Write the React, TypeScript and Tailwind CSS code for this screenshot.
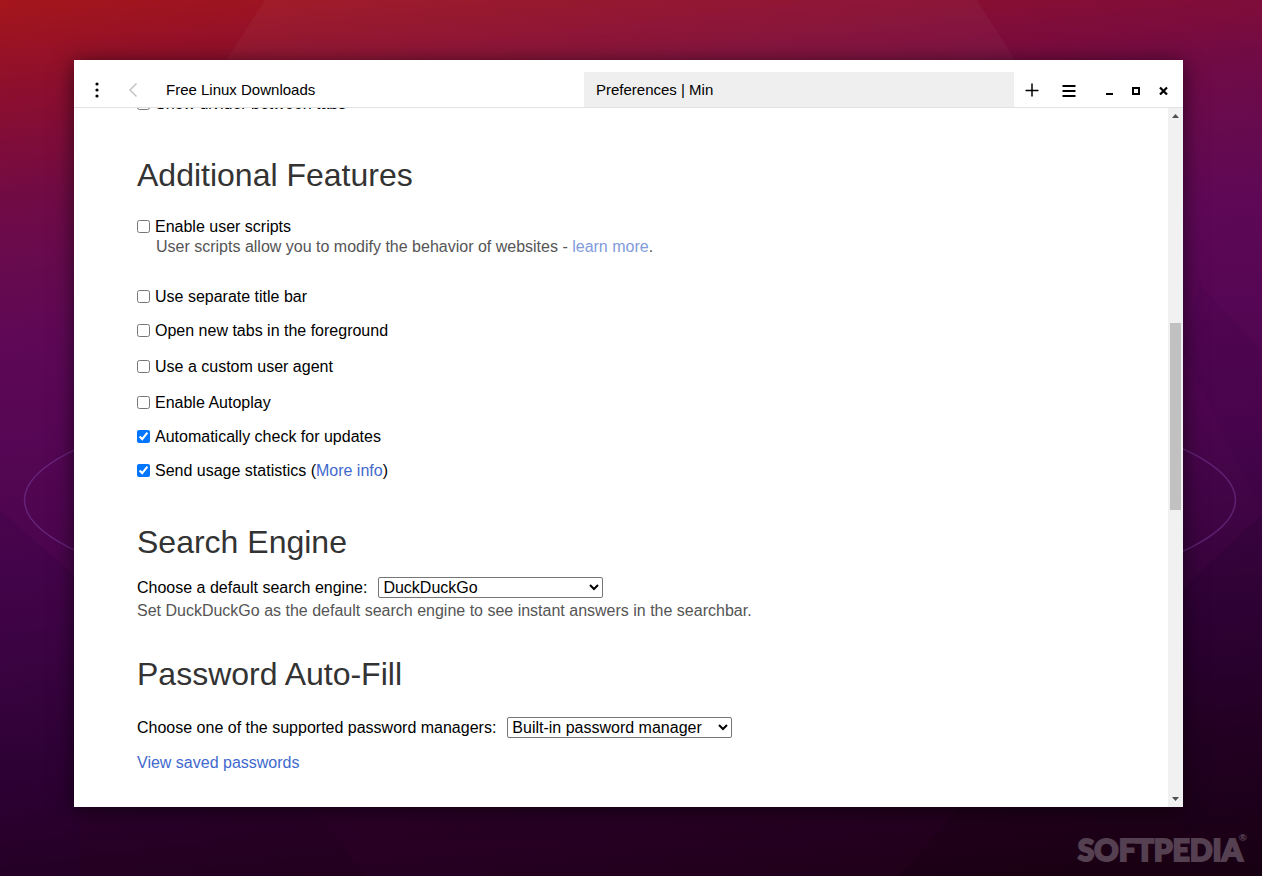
import type { ReactNode } from "react";

function Wallpaper() {
  return (
    <svg
      className="absolute inset-0 h-full w-full"
      viewBox="0 0 1262 876"
      preserveAspectRatio="none"
      aria-hidden="true"
    >
      <defs>
        <linearGradient id="sky" gradientUnits="userSpaceOnUse" x1="0" y1="0" x2="116" y2="1008">
          <stop offset="0" stopColor="#a5161b" />
          <stop offset="0.1" stopColor="#8a0e30" />
          <stop offset="0.2" stopColor="#700b46" />
          <stop offset="0.27" stopColor="#660a4f" />
          <stop offset="0.34" stopColor="#5e0856" />
          <stop offset="0.44" stopColor="#550654" />
          <stop offset="0.54" stopColor="#4c054e" />
          <stop offset="0.65" stopColor="#3e0443" />
          <stop offset="0.77" stopColor="#2e0232" />
          <stop offset="0.87" stopColor="#240021" />
          <stop offset="1" stopColor="#180010" />
        </linearGradient>
      </defs>
      <rect width="1262" height="876" fill="url(#sky)" />
      <polygon points="265,0 977,0 1040,100 225,62" fill="#ffffff" fillOpacity="0.035" />
      <polygon points="0,510 80,580 80,876 0,876" fill="#20003a" fillOpacity="0.14" />
      <polygon points="1200,285 1262,350 1262,510 1182,350" fill="#20003a" fillOpacity="0.08" />
      <polygon points="1262,514 1182,590 1182,876 1262,876" fill="#180020" fillOpacity="0.14" />
      <polygon points="305,800 965,800 900,876 365,876" fill="#40003a" fillOpacity="0.14" />
      <ellipse
        cx="630"
        cy="500"
        rx="605.5"
        ry="126"
        fill="none"
        stroke="#7b3fa0"
        strokeOpacity="0.5"
        strokeWidth="1.5"
      />
    </svg>
  );
}

function IconButton({ label, className, children }: { label: string; className: string; children: ReactNode }) {
  return (
    <button type="button" aria-label={label} className={`flex h-[35px] items-center justify-center ${className}`}>
      {children}
    </button>
  );
}

function TitleBar() {
  return (
    <header className="flex h-12 shrink-0 items-end border-b border-[#e2e2e2] bg-white px-1 text-[15px] leading-5">
      <IconButton label="Tab options" className="w-[37px]">
        <svg width="4" height="16" viewBox="0 0 4 16" fill="#000">
          <circle cx="2" cy="2" r="1.6" />
          <circle cx="2" cy="8" r="1.6" />
          <circle cx="2" cy="14" r="1.6" />
        </svg>
      </IconButton>
      <IconButton label="Back" className="mr-1 w-[35px]">
        <svg width="10" height="16" viewBox="0 0 10 16" fill="none" stroke="#c4c4c4" strokeWidth="1.5">
          <path d="M8.5 1.5 2 8l6.5 6.5" />
        </svg>
      </IconButton>
      <nav className="flex flex-1">
        <button type="button" className="h-[35px] flex-1 px-3 text-left">
          Free Linux Downloads
        </button>
        <button type="button" className="h-[35px] flex-1 bg-[#efefef] px-3 text-left">
          Preferences | Min
        </button>
      </nav>
      <IconButton label="New tab" className="w-9">
        <svg width="14" height="14" viewBox="0 0 14 14" stroke="#000" strokeWidth="1.5">
          <path d="M7 .5v13M.5 7.5h13" />
        </svg>
      </IconButton>
      <IconButton label="Menu" className="mr-2 w-[38px]">
        <svg width="14" height="14" viewBox="0 0 14 14" stroke="#000" strokeWidth="2">
          <path d="M.5 3h13M.5 8h13M.5 13h13" />
        </svg>
      </IconButton>
      <IconButton label="Minimize" className="w-[27px]">
        <svg width="10" height="10" viewBox="0 0 10 10" fill="#000">
          <rect x="1" y="8" width="7" height="2" />
        </svg>
      </IconButton>
      <IconButton label="Maximize" className="w-[27px]">
        <svg width="10" height="10" viewBox="0 0 10 10" fill="none" stroke="#000" strokeWidth="2">
          <rect x="1" y="3" width="6" height="6" />
        </svg>
      </IconButton>
      <IconButton label="Close" className="mr-[2px] w-[27px]">
        <svg width="10" height="10" viewBox="0 0 10 10" stroke="#000" strokeWidth="2.2">
          <path d="m1 2.5 7 7M8 2.5l-7 7" />
        </svg>
      </IconButton>
    </header>
  );
}

function Option({ children, checked = false }: { children: ReactNode; checked?: boolean }) {
  return (
    <label className="flex h-[21px] items-center gap-[5px]">
      <input type="checkbox" defaultChecked={checked} className="h-[13px] w-[13px] shrink-0" />
      <span>{children}</span>
    </label>
  );
}

function Heading({ children }: { children: ReactNode }) {
  return <h2 className="text-[32px] leading-9 text-[#333]">{children}</h2>;
}

function Picker({ id, label, options }: { id: string; label: string; options: string[] }) {
  return (
    <div className="flex items-center gap-[11px]">
      <label htmlFor={id}>{label}</label>
      <select id={id} className="h-[21px] w-[225px] rounded-[2px] border border-[#767676] bg-white leading-5">
        {options.map((option) => (
          <option key={option}>{option}</option>
        ))}
      </select>
    </div>
  );
}

function Preferences() {
  return (
    <main className="flex-1 overflow-hidden px-[63px] pb-8 leading-5">
      <div className="-mt-[15px]">
        <Option>Show divider between tabs</Option>
      </div>

      <section className="pt-[43px]">
        <Heading>Additional Features</Heading>
        <div className="mt-[23px]">
          <Option>Enable user scripts</Option>
          <p className="pl-[19px] text-[#555]">
            User scripts allow you to modify the behavior of websites -{" "}
            <a href="#scripts" className="text-[#7f9bdc]">
              learn more
            </a>
            .
          </p>
        </div>
        <div className="mt-[29px] flex flex-col gap-[13px]">
          <Option>Use separate title bar</Option>
          <div className="flex flex-col gap-[15px]">
            <Option>Open new tabs in the foreground</Option>
            <Option>Use a custom user agent</Option>
            <Option>Enable Autoplay</Option>
          </div>
          <Option checked>Automatically check for updates</Option>
          <Option checked>
            Send usage statistics (
            <a href="#statistics" className="text-[#4169cd]">
              More info
            </a>
            )
          </Option>
        </div>
      </section>

      <section className="pt-[43px]">
        <Heading>Search Engine</Heading>
        <div className="mt-[17px]">
          <Picker
            id="engine"
            label="Choose a default search engine:"
            options={["DuckDuckGo"]}
          />
          <p className="mt-[3px] text-[#555]">
            Set DuckDuckGo as the default search engine to see instant answers in the searchbar.
          </p>
        </div>
      </section>

      <section className="pt-[35px]">
        <Heading>Password Auto-Fill</Heading>
        <div className="mt-[25px]">
          <Picker
            id="manager"
            label="Choose one of the supported password managers:"
            options={["Built-in password manager"]}
          />
          <p className="mt-[15px]">
            <a href="#passwords" className="text-[#4169cd]">
              View saved passwords
            </a>
          </p>
        </div>
      </section>
    </main>
  );
}

function ScrollRail() {
  return (
    <div className="flex w-[15px] shrink-0 flex-col bg-[#f1f1f1]" aria-hidden="true">
      <div className="flex h-[15px] items-center justify-center">
        <svg width="7" height="4" viewBox="0 0 7 4" fill="#505050">
          <path d="M0 4 3.5 0 7 4z" />
        </svg>
      </div>
      <div className="grow-[200]" />
      <div className="mx-[2px] grow-[188] bg-[#c1c1c1]" />
      <div className="grow-[281]" />
      <div className="flex h-4 items-center justify-center">
        <svg width="7" height="4" viewBox="0 0 7 4" fill="#505050">
          <path d="M0 0h7L3.5 4z" />
        </svg>
      </div>
    </div>
  );
}

export default function App() {
  return (
    <div className="relative flex min-h-screen flex-col overflow-hidden bg-[#32023a] pt-[60px] pr-[79px] pb-[69px] pl-[74px] font-['Liberation_Sans',Arial,sans-serif] text-base text-black">
      <Wallpaper />
      <div className="relative flex flex-1 flex-col bg-white shadow-[0_3px_20px_rgba(0,0,0,0.6)]">
        <TitleBar />
        <div className="flex flex-1">
          <Preferences />
          <ScrollRail />
        </div>
      </div>
      <div className="absolute right-[15px] bottom-[9px] flex items-start font-['Lato',sans-serif] text-[30px] leading-9 font-black text-[#554052] [-webkit-text-stroke:2px_#554052]">
        SOFTPEDIA
        <span className="-ml-1 text-[10px] leading-3 [-webkit-text-stroke:0]">®</span>
      </div>
    </div>
  );
}
